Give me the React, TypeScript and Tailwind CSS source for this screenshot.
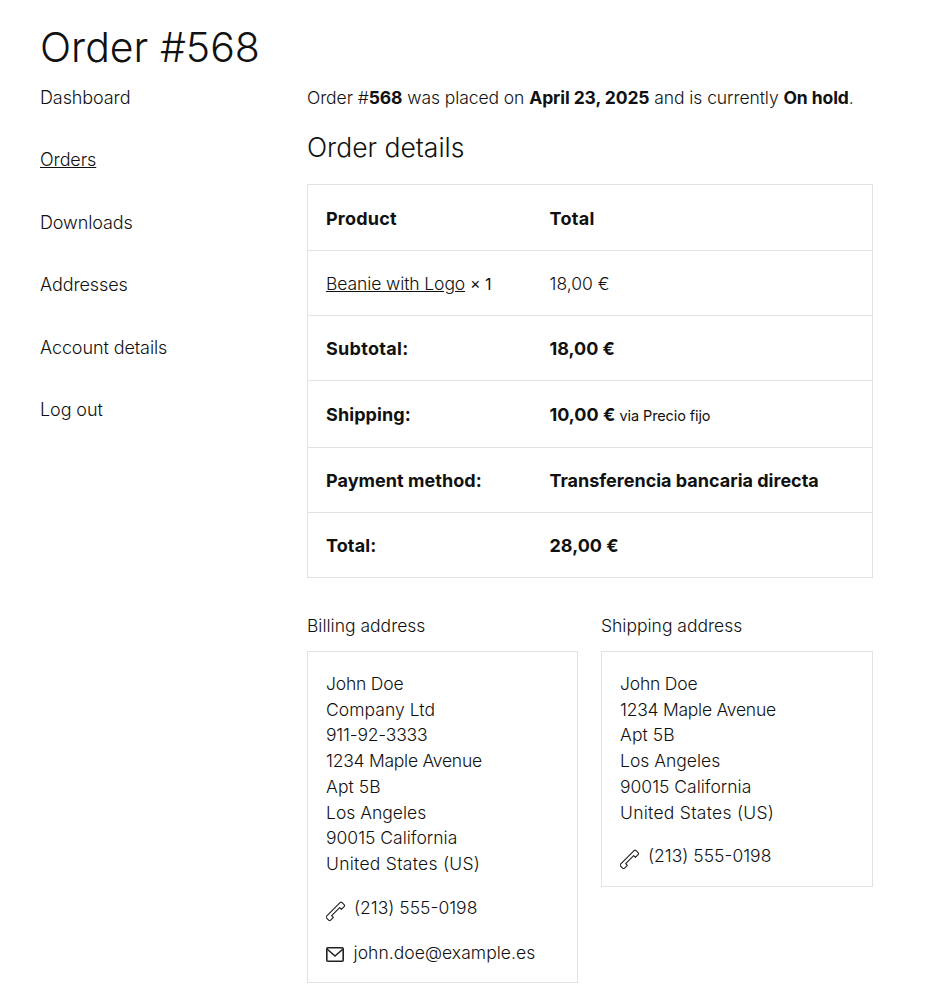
const font = { fontFamily: "Inter, 'Liberation Sans', sans-serif" };
function Phone() {
  return (
    <svg width="20" height="20" viewBox="0 0 20 20" fill="none" stroke="#222" strokeWidth="1.2" strokeLinejoin="round" className="shrink-0 mt-[6px]">
      <path transform="translate(9 10) rotate(45) scale(0.95)" d="M-2.5 -10Q-2.5 -11.5 -1 -11.5H2Q3.5 -11.5 3.5 -10V-6H1V6H3.5V10Q3.5 11.5 2 11.5H-1Q-2.5 11.5 -2.5 10Z" />
    </svg>
  );
}
function Mail() {
  return (
    <svg width="20" height="20" viewBox="0 0 20 20" fill="none" stroke="#222" strokeWidth="1.6" className="shrink-0 mt-[4px]">
      <rect x="0.8" y="3.8" width="16.4" height="13.4" rx="1" />
      <path d="M1 5l8 7 8-7" />
    </svg>
  );
}
const nav = ["Dashboard", "Orders", "Downloads", "Addresses", "Account details", "Log out"];
const rows: [string, string, React.ReactNode, string][] = [
  ["Subtotal:", "tracking-[0.3px]", "18,00 €", "h-[65px]"],
  ["Shipping:", "tracking-[0.1px]", <>10,00 € <span className="text-[14.5px] font-normal tracking-[-0.1px]">via Precio fijo</span></>, "h-[67px]"],
  ["Payment method:", "tracking-[0.05px]", "Transferencia bancaria directa", "h-[65px]"],
  ["Total:", "tracking-[0.1px]", "28,00 €", "h-[65px]"],
];
const billing: [string, string][] = [
  ["John Doe", "tracking-[-0.2px]"],
  ["Company Ltd", "tracking-[0.05px]"],
  ["911-92-3333", "tracking-[-0.2px]"],
  ["1234 Maple Avenue", "tracking-[-0.25px]"],
  ["Apt 5B", "tracking-[0.1px]"],
  ["Los Angeles", "tracking-[0px]"],
  ["90015 California", "tracking-[0px]"],
  ["United States (US)", "tracking-[0.27px]"],
];
const shipping = billing.filter(([l]) => l !== "Company Ltd" && l !== "911-92-3333");
function Lines({ items }: { items: [string, string][] }) {
  return (
    <div>
      {items.map(([l, t]) => <p key={l} className={t}>{l}</p>)}
    </div>
  );
}
export default function App() {
  return (
    <div style={font} className="bg-white text-[#111] w-[937px] h-[988px] overflow-hidden pl-[40px] pr-[64px] pt-[22px] text-[18px] font-light">
      <h1 className="text-[41px] leading-[50px] font-light">Order #568</h1>
      <div className="flex mt-[13px]">
        <nav className="w-[267px] shrink-0 flex flex-col gap-[36.4px] leading-[26px] tracking-[-0.1px]">
          {nav.map((n) => <a key={n} className={n === "Orders" ? "underline" : ""}>{n}</a>)}
        </nav>
        <main className="w-[566px]">
          <p className="leading-[26px] whitespace-nowrap text-[17.5px] tracking-[-0.08px]">Order #<b className="font-bold">568</b> was placed on <b className="font-bold">April 23, 2025</b> and is currently <b className="font-bold">On hold</b>.</p>
          <h2 className="text-[26.5px] leading-[34px] mt-[19px] font-light">Order details</h2>
          <div className="mt-[20px] border border-[#e2e2e2]">
            <div className="flex items-center h-[65px] px-[18px] pt-[1px] font-bold tracking-[0.2px]"><span className="w-[223.5px]">Product</span><span className="tracking-[0.3px]">Total</span></div>
            <div className="flex items-center h-[65px] px-[18px] pt-[2px] border-t border-[#e2e2e2] text-[17.5px]"><span className="w-[223.5px]"><a className="underline tracking-[-0.1px]">Beanie with Logo</a> <span className="font-normal text-[16px]">× 1</span></span><span>18,00 €</span></div>
            {rows.map(([a, t, b, h]) => (
              <div key={a} className={`flex items-center px-[18px] border-t border-[#e2e2e2] font-bold ${h}`}><span className={`w-[223.5px] shrink-0 ${t}`}>{a}</span><span className="whitespace-nowrap">{b}</span></div>
            ))}
          </div>
          <div className="flex gap-[23px] mt-[34px] text-[17.5px]">
            <section className="w-[271px]">
              <h3 className="leading-[28px] font-light">Billing address</h3>
              <div className="mt-[11px] border border-[#e2e2e2] px-[18px] pt-[19px] h-[332px] leading-[25.7px]">
                <Lines items={billing} />
                <div className="flex items-start gap-[8px] mt-[18px]"><Phone /><span>(213) 555-0198</span></div>
                <div className="flex items-start gap-[7.5px] mt-[19px] tracking-[0.05px]"><Mail /><span>john.doe@example.es</span></div>
              </div>
            </section>
            <section className="w-[272px]">
              <h3 className="leading-[28px] font-light">Shipping address</h3>
              <div className="mt-[11px] border border-[#e2e2e2] px-[18px] pt-[19px] h-[236px] leading-[25.7px]">
                <Lines items={shipping} />
                <div className="flex items-start gap-[8px] mt-[18px]"><Phone /><span>(213) 555-0198</span></div>
              </div>
            </section>
          </div>
        </main>
      </div>
    </div>
  );
}
